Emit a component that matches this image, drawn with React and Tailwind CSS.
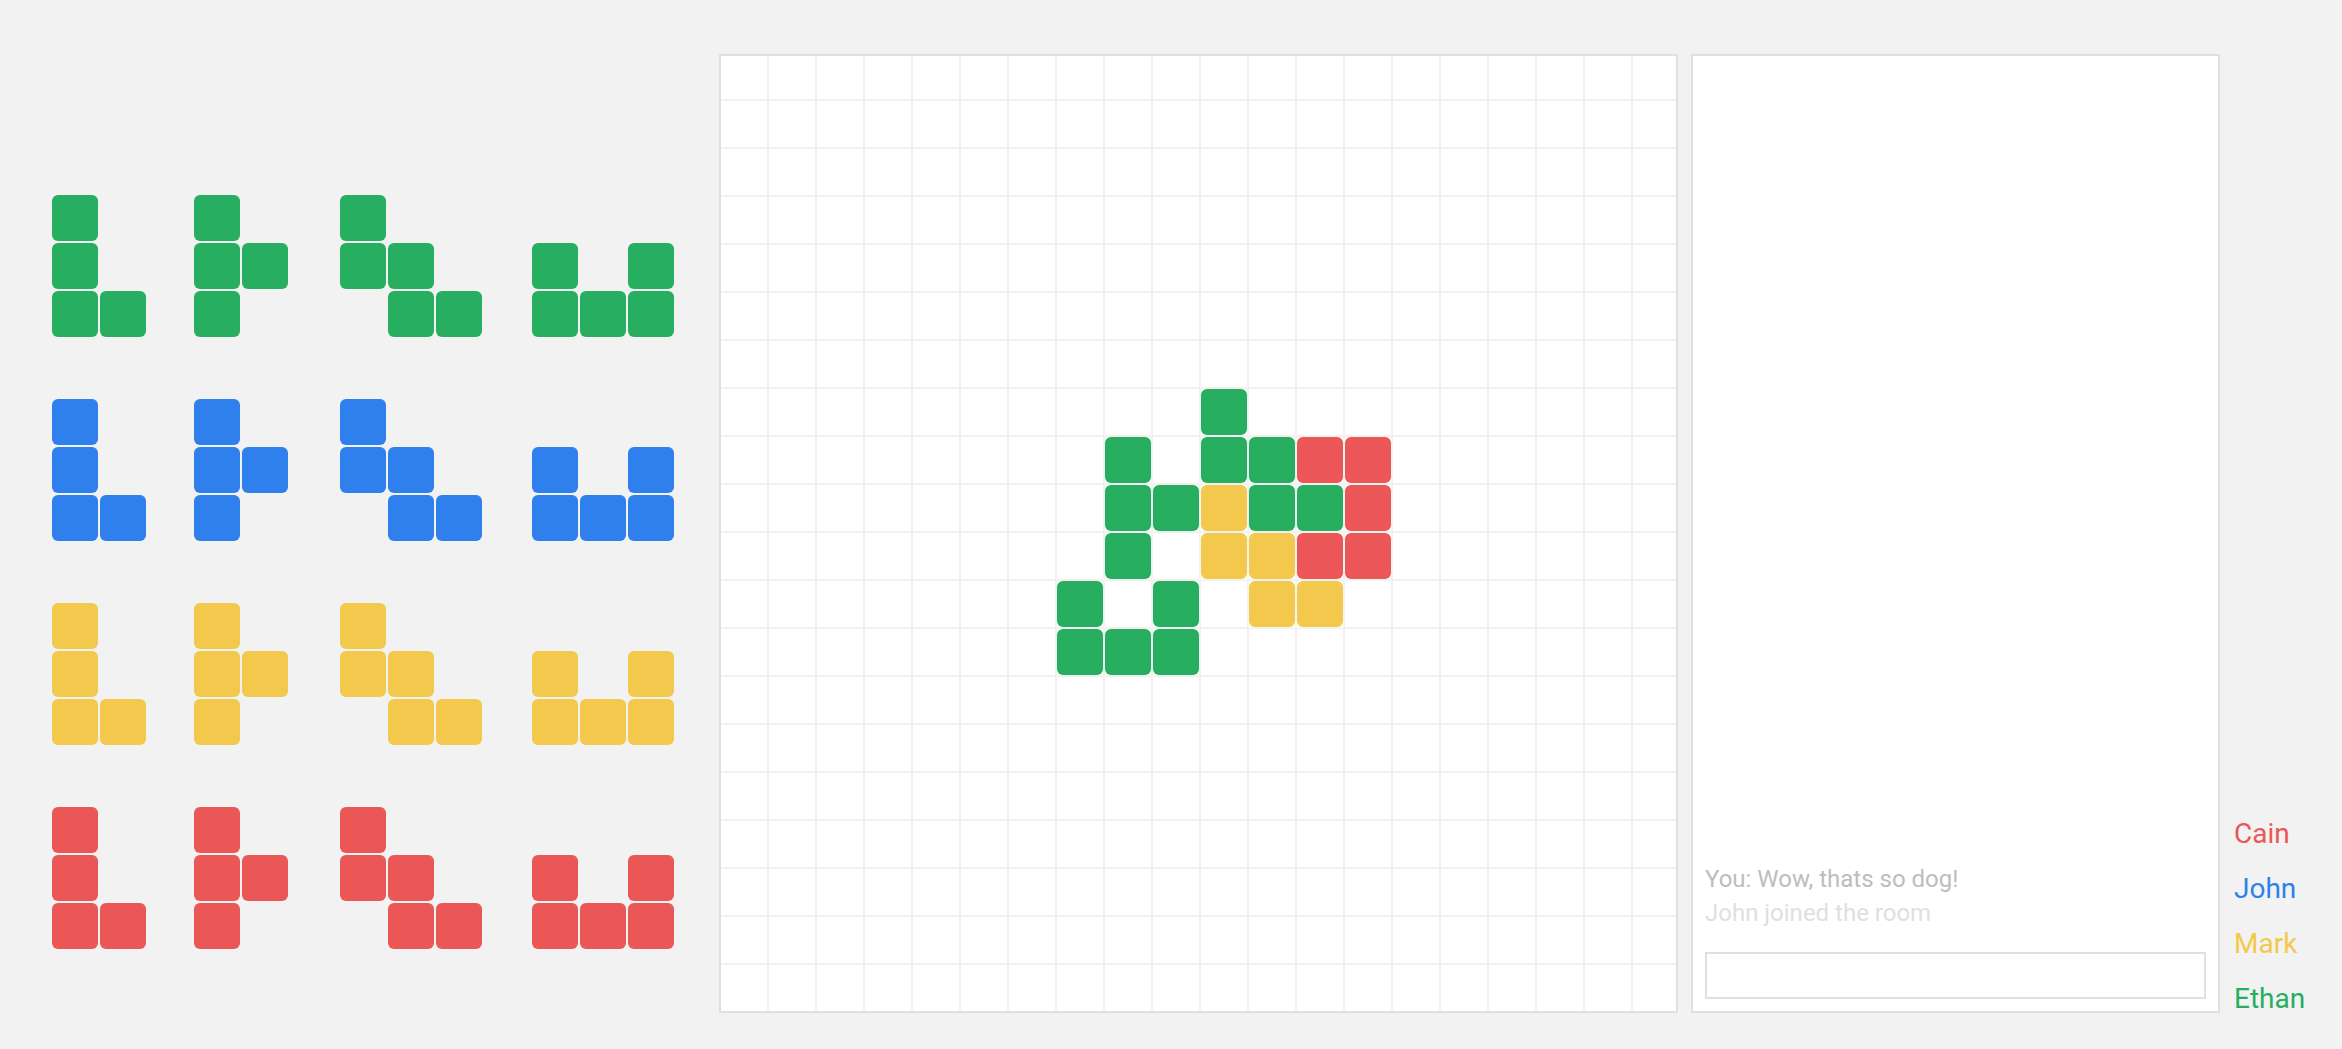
const COLORS = {
  g: "bg-[#27ae60]",
  b: "bg-[#2f80ed]",
  y: "bg-[#f2c94c]",
  r: "bg-[#eb5757]",
};

// each piece drawn row by row, "x" is a tile, "." is empty space
const PIECES = [
  { shape: ["x.", "x.", "xx"], gap: "" },
  { shape: ["x.", "xx", "x."], gap: "ml-[48px]" },
  { shape: ["x..", "xx.", ".xx"], gap: "ml-[52px]" },
  { shape: ["...", "x.x", "xxx"], gap: "ml-[50px]" },
];

const BOARD = {
  "7-10": "g",
  "8-8": "g", "8-10": "g", "8-11": "g", "8-12": "r", "8-13": "r",
  "9-8": "g", "9-9": "g", "9-10": "y", "9-11": "g", "9-12": "g", "9-13": "r",
  "10-8": "g", "10-10": "y", "10-11": "y", "10-12": "r", "10-13": "r",
  "11-7": "g", "11-9": "g", "11-11": "y", "11-12": "y",
  "12-7": "g", "12-8": "g", "12-9": "g",
};

const PLAYERS = [
  { name: "Cain", color: "text-[#eb5757]" },
  { name: "John", color: "text-[#2f80ed]" },
  { name: "Mark", color: "text-[#f2c94c]" },
  { name: "Ethan", color: "text-[#27ae60]" },
];

const Piece = ({ shape, color, className }) => (
  <div className={`flex flex-col gap-[2px] ${className}`}>
    {shape.map((row, i) => (
      <div key={i} className="flex gap-[2px]">
        {row.split("").map((c, j) => (
          <div
            key={j}
            className={`h-[46px] w-[46px] rounded-[6px] ${c === "x" ? COLORS[color] : ""}`}
          />
        ))}
      </div>
    ))}
  </div>
);

const Board = () => {
  const cells = [];
  for (let r = 0; r < 20; r++) {
    for (let c = 0; c < 20; c++) {
      const tile = BOARD[`${r}-${c}`];
      cells.push(
        <div key={`${r}-${c}`} className="h-[46px] w-[46px] bg-white">
          {tile && <div className={`h-full w-full rounded-[6px] ${COLORS[tile]}`} />}
        </div>
      );
    }
  }
  return (
    <div className="ml-[45px] h-[959px] w-[959px] shrink-0 overflow-hidden border-2 border-[#e0e0e0] bg-white">
      <div className="-mt-[3px] grid w-[958px] grid-cols-[repeat(20,46px)] gap-[2px] bg-[#f2f2f2]">
        {cells}
      </div>
    </div>
  );
};

const App = () => {
  return (
    <div className="flex h-screen w-full items-start overflow-hidden bg-[#f2f2f2] pt-[54px] font-['Roboto',sans-serif]">
      <div className="ml-[52px] flex w-[622px] shrink-0 flex-col gap-[62px] pt-[141px]">
        {["g", "b", "y", "r"].map((color) => (
          <div key={color} className="flex items-start">
            {PIECES.map((p, i) => (
              <Piece key={i} shape={p.shape} color={color} className={p.gap} />
            ))}
          </div>
        ))}
      </div>

      <Board />

      <div className="ml-[13px] flex h-[959px] w-[529px] shrink-0 flex-col justify-end border-2 border-[#e0e0e0] bg-white p-3">
        <div className="mb-[22px] text-[24px] leading-[34px]">
          <p className="text-[#bdbdbd]">You: Wow, thats so dog!</p>
          <p className="text-[#e0e0e0]">John joined the room</p>
        </div>
        <input
          type="text"
          className="h-[47px] w-full border-2 border-[#e0e0e0] bg-white px-2 text-[20px] outline-none"
        />
      </div>

      <div className="ml-[14px] flex flex-col gap-[22px] pt-[763px] text-[28px] leading-[33px]">
        {PLAYERS.map((p) => (
          <span key={p.name} className={p.color}>
            {p.name}
          </span>
        ))}
      </div>
    </div>
  );
};

export default App;
